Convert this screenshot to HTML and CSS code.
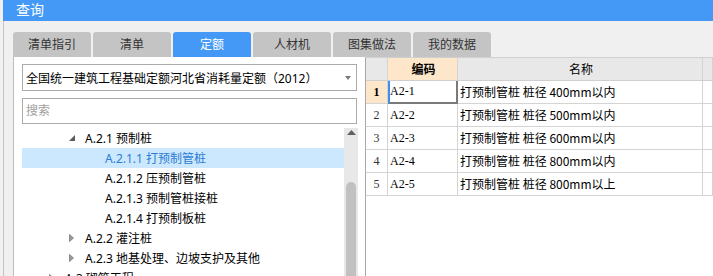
FILE: index.html
```html
<!DOCTYPE html>
<html lang="zh-CN">
<head>
    <meta charset="UTF-8">
    <title>查询</title>
    <link rel="stylesheet" href="styles.css">
</head>
<body>
    <div class="titlebar">查询</div>

    <div class="window">
        <div class="tabs">
            <div class="tab">清单指引</div>
            <div class="tab">清单</div>
            <div class="tab active">定额</div>
            <div class="tab">人材机</div>
            <div class="tab">图集做法</div>
            <div class="tab">我的数据</div>
        </div>

        <div class="main">
            <!-- 左侧：定额库选择与章节树 -->
            <div class="left-pane">
                <div class="select">
                    <span>全国统一建筑工程基础定额河北省消耗量定额（2012）</span>
                    <span class="caret"></span>
                </div>
                <div class="search">搜索</div>

                <div class="tree-wrap">
                    <div class="tree">
                        <div class="node lv2">
                            <span class="toggle"><svg width="8" height="8" viewBox="0 0 8 8"><polygon points="7,1 7,7 1,7" fill="#5a5a5a"/></svg></span>
                            A.2.1 预制桩
                        </div>
                        <div class="node lv3 selected"><span class="toggle"></span>A.2.1.1 打预制管桩</div>
                        <div class="node lv3"><span class="toggle"></span>A.2.1.2 压预制管桩</div>
                        <div class="node lv3"><span class="toggle"></span>A.2.1.3 预制管桩接桩</div>
                        <div class="node lv3"><span class="toggle"></span>A.2.1.4 打预制板桩</div>
                        <div class="node lv2">
                            <span class="toggle"><svg width="8" height="8" viewBox="0 0 8 8"><polygon points="1.5,0.5 5.5,4 1.5,7.5" fill="#9a9a9a" stroke="#7a7a7a" stroke-width="0.8"/></svg></span>
                            A.2.2 灌注桩
                        </div>
                        <div class="node lv2">
                            <span class="toggle"><svg width="8" height="8" viewBox="0 0 8 8"><polygon points="1.5,0.5 5.5,4 1.5,7.5" fill="#9a9a9a" stroke="#7a7a7a" stroke-width="0.8"/></svg></span>
                            A.2.3 地基处理、边坡支护及其他
                        </div>
                        <div class="node lv1">
                            <span class="toggle"><svg width="8" height="8" viewBox="0 0 8 8"><polygon points="1.5,0.5 5.5,4 1.5,7.5" fill="#9a9a9a" stroke="#7a7a7a" stroke-width="0.8"/></svg></span>
                            A.3 砌筑工程
                        </div>
                    </div>
                    <div class="scrollbar">
                        <svg class="arrow-up" width="9" height="5" viewBox="0 0 9 5"><polygon points="0,5 4.5,0 9,5" fill="#606060"/></svg>
                        <div class="thumb"></div>
                    </div>
                </div>
            </div>

            <!-- 右侧：定额子目表格 -->
            <div class="grid">
                <div class="row head">
                    <div class="cell num"></div>
                    <div class="cell code">编码</div>
                    <div class="cell name">名称</div>
                    <div class="cell"></div>
                </div>
                <div class="row">
                    <div class="cell num current">1</div>
                    <div class="cell code focus">A2-1</div>
                    <div class="cell name">打预制管桩 桩径 400mm以内</div>
                    <div class="cell"></div>
                </div>
                <div class="row">
                    <div class="cell num">2</div>
                    <div class="cell code">A2-2</div>
                    <div class="cell name">打预制管桩 桩径 500mm以内</div>
                    <div class="cell"></div>
                </div>
                <div class="row">
                    <div class="cell num">3</div>
                    <div class="cell code">A2-3</div>
                    <div class="cell name">打预制管桩 桩径 600mm以内</div>
                    <div class="cell"></div>
                </div>
                <div class="row">
                    <div class="cell num">4</div>
                    <div class="cell code">A2-4</div>
                    <div class="cell name">打预制管桩 桩径 800mm以内</div>
                    <div class="cell"></div>
                </div>
                <div class="row">
                    <div class="cell num">5</div>
                    <div class="cell code">A2-5</div>
                    <div class="cell name">打预制管桩 桩径 800mm以上</div>
                    <div class="cell"></div>
                </div>
            </div>
        </div>
    </div>
</body>
</html>
```

FILE: styles.css
```css
/* Estructura general */
* { box-sizing: border-box; }

body {
    margin: 0;
    width: 713px;
    height: 276px;
    overflow: hidden;
    background-color: #f0f0f0;
    font-family: "Noto Sans", "Noto Sans CJK SC", sans-serif;
    font-size: 12px;
    color: #000;
}

.titlebar {
    margin-left: 3px;
    height: 21px;
    padding-left: 13px;
    background-color: #4499f7;
    color: #fff;
    font-size: 14px;
    line-height: 20px;
}

.window {
    margin-left: 3px;
    height: 255px;
    padding: 11px 0 0 9px;
    border-left: 1px solid #c4c4c4;
}

/* Pestañas */
.tabs {
    display: flex;
    gap: 2px;
    height: 25px;
}

.tab {
    width: 78px;
    background-color: #c4c4c4;
    border-radius: 3px 3px 0 0;
    text-align: center;
    line-height: 25px;
    color: #333;
}

.tab.active {
    background-color: #4499f7;
    color: #fff;
}

.main {
    display: flex;
    height: 219px;
}

/* Panel izquierdo */
.left-pane {
    width: 352px;
    padding: 7px 0 0 8px;
    background-color: #fff;
    border-left: 1px solid #bdbdbd;
}

.select {
    display: flex;
    align-items: center;
    justify-content: space-between;
    width: 335px;
    height: 27px;
    padding: 0 5px 0 3px;
    border: 1px solid #ababab;
}

.caret {
    width: 0;
    height: 0;
    border-left: 3.5px solid transparent;
    border-right: 3.5px solid transparent;
    border-top: 4px solid #7a7a7a;
}

.search {
    width: 335px;
    height: 26px;
    margin-top: 7px;
    padding-left: 3px;
    border: 1px solid #ababab;
    color: #a0a0a0;
    line-height: 24px;
}

.tree-wrap {
    display: flex;
    margin-top: 4px;
    height: 150px;
}

.tree { width: 322px; }

.node {
    display: flex;
    align-items: center;
    height: 20px;
    white-space: nowrap;
}

.node.lv1 { padding-left: 24px; }
.node.lv2 { padding-left: 44px; }
.node.lv3 { padding-left: 64px; }

.node.selected {
    background-color: #cce8ff;
    color: #2b7cd3;
}

.toggle {
    display: flex;
    align-items: center;
    width: 19px;
    height: 20px;
    padding-left: 2px;
}

.scrollbar {
    display: flex;
    flex-direction: column;
    align-items: center;
    width: 14px;
    background-color: #e8e8e8;
}

.arrow-up { margin-top: 2px; }

.thumb {
    flex: 1;
    width: 10px;
    margin-top: 47px;
    background-color: #c1c1c1;
    border-radius: 5px 5px 0 0;
}

/* Tabla de la derecha */
.grid {
    flex: 1;
    background-color: #fff;
    border-left: 1px solid #a8a8a8;
    border-top: 1px solid #d0d0d0;
}

.row {
    display: grid;
    grid-template-columns: 22px 70px 245px 1fr;
    height: 23px;
    border-bottom: 1px solid #d4d4d4;
}

.cell {
    padding-left: 2px;
    border-right: 1px solid #d4d4d4;
    line-height: 22px;
    white-space: nowrap;
    overflow: hidden;
    font-family: "Liberation Serif", "Noto Sans CJK SC", serif;
}

.cell.num {
    padding-left: 0;
    text-align: center;
    color: #333;
}

.cell.code { padding-left: 2px; }

.row.head { background-color: #e8e8e8; border-bottom-color: #cfcfcf; }
.row.head .cell { font-family: "Noto Sans CJK SC", sans-serif; text-align: center; }
.row.head .code { background-color: #fde6c9; font-weight: bold; }

.cell.current {
    background-color: #fde6c9;
    font-weight: bold;
    color: #000;
}

.cell.focus {
    border-left: 2px solid #3c8ff0;
    border-right: 2px solid #7a7a7a;
    border-bottom: 2px solid #7a7a7a;
    padding-left: 0;
    line-height: 21px;
    margin-bottom: -1px;
}

.cell.name { font-family: "Noto Sans CJK SC", sans-serif; }
```
